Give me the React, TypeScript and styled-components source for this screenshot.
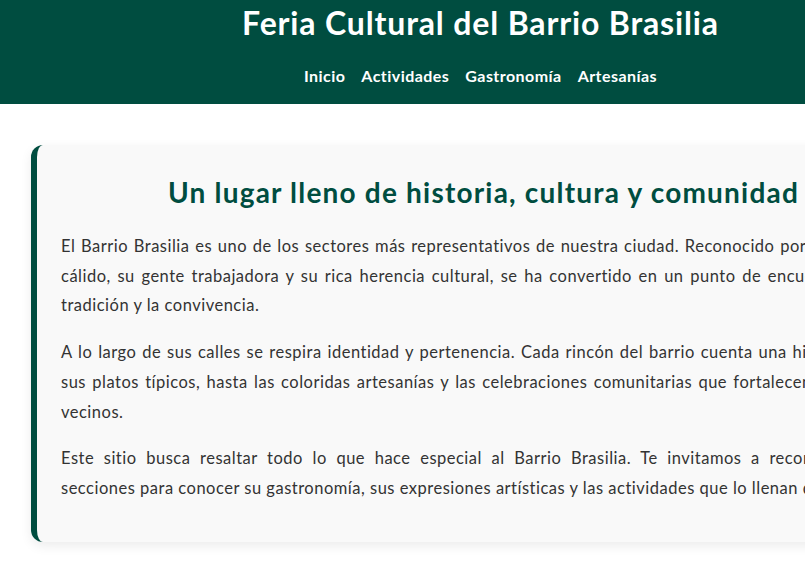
import React from 'react';
import styled, { createGlobalStyle } from 'styled-components';

const GREEN = '#004d40';

const GlobalStyle = createGlobalStyle`
  html {
    scrollbar-width: none;
  }
  html::-webkit-scrollbar, body::-webkit-scrollbar {
    display: none;
  }
  body {
    margin: 0;
    background: #ffffff;
    font-family: Lato, 'Open Sans', 'Liberation Sans', sans-serif;
    color: #333;
  }
`;

const Page = styled.div`
  width: 961px;
`;

const Header = styled.header`
  background: ${GREEN};
  color: #fff;
  padding: 3px 0 18px;
  display: flex;
  flex-direction: column;
  align-items: center;
`;

const Title = styled.h1`
  margin: 0;
  font-size: 32px;
  line-height: 40px;
  font-weight: 700;
  letter-spacing: 0.85px;
`;

const Nav = styled.nav`
  display: flex;
  gap: 16px;
  margin-top: 23px;
`;

const NavLink = styled.a`
  color: #fff;
  text-decoration: none;
  font-weight: 700;
  font-size: 16px;
  line-height: 20px;
  letter-spacing: 0.45px;
`;

const Main = styled.main`
  padding: 41px 31px 40px;
`;

const Card = styled.section`
  background: #f9f9f9;
  border-left: 6px solid ${GREEN};
  border-radius: 12px;
  box-shadow: 0 4px 12px rgba(0, 0, 0, 0.08);
  padding: 29px 24px 21px;
`;

const Heading = styled.h2`
  margin: 0 0 22px;
  text-align: center;
  color: ${GREEN};
  font-size: 28px;
  line-height: 36px;
  font-weight: 700;
  letter-spacing: 1.2px;
`;

const Paragraph = styled.p`
  margin: 0 0 17px;
  font-size: 16.5px;
  line-height: 29.7px;
  letter-spacing: 0.5px;
  text-align: justify;
`;

const links = ['Inicio', 'Actividades', 'Gastronomía', 'Artesanías'];

export default function App() {
  return (
    <Page>
      <GlobalStyle />
      <Header>
        <Title>Feria Cultural del Barrio Brasilia</Title>
        <Nav>
          {links.map(l => (
            <NavLink key={l} href="#">{l}</NavLink>
          ))}
        </Nav>
      </Header>
      <Main>
        <Card>
          <Heading>Un lugar lleno de historia, cultura y comunidad</Heading>
          <Paragraph>
            El Barrio Brasilia es uno de los sectores más representativos de nuestra ciudad. Reconocido por su ambiente
            cálido, su gente trabajadora y su rica herencia cultural, se ha convertido en un punto de encuentro para la
            tradición y la convivencia.
          </Paragraph>
          <Paragraph>
            A lo largo de sus calles se respira identidad y pertenencia. Cada rincón del barrio cuenta una historia, desde
            sus platos típicos, hasta las coloridas artesanías y las celebraciones comunitarias que fortalecen la unión de
            vecinos.
          </Paragraph>
          <Paragraph>
            Este sitio busca resaltar todo lo que hace especial al Barrio Brasilia. Te invitamos a recorrer nuestras
            secciones para conocer su gastronomía, sus expresiones artísticas y las actividades que lo llenan de vida.
          </Paragraph>
        </Card>
      </Main>
    </Page>
  );
}
